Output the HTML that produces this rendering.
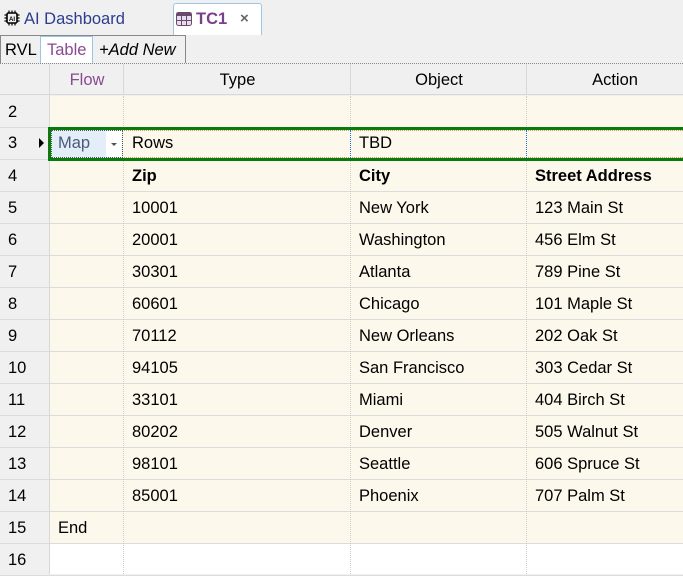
<!DOCTYPE html>
<html><head><meta charset="utf-8"><style>
*{box-sizing:border-box;margin:0;padding:0}
body{width:683px;height:574px;overflow:hidden;background:#f0f0f0;font-family:"Liberation Sans","DejaVu Sans",sans-serif;font-size:16.5px;color:#000;position:relative}
.a{position:absolute}
.t{white-space:nowrap}
</style></head><body>
<div class="a" style="left:0;top:0;width:683px;height:34px;background:#f0f0f0"></div>
<svg class="a" style="left:4px;top:10px" width="16" height="16" viewBox="0 0 16 16">
<rect x="3" y="3" width="10" height="10" rx="1.5" fill="none" stroke="#000" stroke-width="1.6"/>
<g stroke="#000" stroke-width="1.2"><path d="M5 0.5v2.5M8 0.5v2.5M11 0.5v2.5M5 13v2.5M8 13v2.5M11 13v2.5M0.5 5h2.5M0.5 8h2.5M0.5 11h2.5M13 5h2.5M13 8h2.5M13 11h2.5"/></g>
<text x="8" y="11" font-size="6" font-weight="bold" text-anchor="middle" font-family="Liberation Sans">AI</text>
</svg>
<div class="a t" style="left:24px;top:10px;color:#2b3d8f;font-size:16.5px">AI Dashboard</div>
<div class="a" style="left:173px;top:3px;width:89px;height:32px;background:#fff;border:1px solid #9cc6e8;border-bottom:none;border-radius:3px 3px 0 0"></div>
<svg class="a" style="left:176px;top:12px" width="16" height="14" viewBox="0 0 16 14">
<rect x="0.5" y="0.5" width="15" height="13" rx="2" fill="#e8dcef" stroke="#6a4a68"/>
<rect x="0.5" y="0.5" width="15" height="3.5" fill="#6a4a68"/>
<path d="M5.5 4v10M10.5 4v10M0.5 8.5h15" stroke="#6a4a68"/>
</svg>
<div class="a t" style="left:196px;top:10px;color:#7b3f8a;font-weight:bold;font-size:16.5px">TC1</div>
<div class="a t" style="left:240px;top:10px;color:#666;font-size:15px;font-weight:bold">×</div>
<div class="a" style="left:0;top:35px;width:683px;height:29px;background:#f0f0f0;border-bottom:1px dotted #888"></div>
<div class="a" style="left:0;top:35px;width:186px;height:28px;border:1px solid #888;border-bottom:none;background:#f0f0f0"></div>
<div class="a t" style="left:5px;top:41px">RVL</div>
<div class="a" style="left:40px;top:36px;width:53px;height:27px;background:#fff;border:1px solid #9cc6e8;border-bottom:none"></div>
<div class="a t" style="left:47px;top:41px;color:#8a4a8e">Table</div>
<div class="a t" style="left:99px;top:41px;font-style:italic">+Add New</div>
<div class="a" style="left:0;top:64px;width:683px;height:31px;background:#f0f0f0;border-bottom:1px solid #d8d8d8"></div>
<div class="a t" style="left:50px;top:71px;width:74px;text-align:center;color:#8a4a8e">Flow</div>
<div class="a t" style="left:124px;top:71px;width:227px;text-align:center">Type</div>
<div class="a t" style="left:351px;top:71px;width:176px;text-align:center">Object</div>
<div class="a t" style="left:527px;top:71px;width:176px;text-align:center">Action</div>
<div class="a" style="left:50px;top:96px;width:633px;height:448px;background:#fdf8ec"></div>
<div class="a" style="left:50px;top:544px;width:633px;height:30px;background:#fff"></div>
<div id="g"></div>
<div class="a" style="left:49px;top:64px;width:1px;height:510px;background:#d8d8d8"></div>
<div class="a" style="left:123px;top:64px;width:1px;height:31px;background:#d8d8d8"></div>
<div class="a" style="left:350px;top:64px;width:1px;height:31px;background:#d8d8d8"></div>
<div class="a" style="left:526px;top:64px;width:1px;height:31px;background:#d8d8d8"></div>
<div class="a" style="left:123px;top:96px;height:478px;border-left:1px dotted #ccc"></div>
<div class="a" style="left:350px;top:96px;height:478px;border-left:1px dotted #ccc"></div>
<div class="a" style="left:526px;top:96px;height:478px;border-left:1px dotted #ccc"></div>
<script>
var rows=[["",[]],["",[]],["",["Zip","City","Street Address"],1],["",["10001","New York","123 Main St"]],["",["20001","Washington","456 Elm St"]],["",["30301","Atlanta","789 Pine St"]],["",["60601","Chicago","101 Maple St"]],["",["70112","New Orleans","202 Oak St"]],["",["94105","San Francisco","303 Cedar St"]],["",["33101","Miami","404 Birch St"]],["",["80202","Denver","505 Walnut St"]],["",["98101","Seattle","606 Spruce St"]],["",["85001","Phoenix","707 Palm St"]],["End",[]],["",[]]];
var h="";
for(var i=0;i<rows.length;i++){var y=96+i*32;var n=i+2;
h+='<div class="a" style="left:0;top:'+(y+31)+'px;width:683px;height:1px;background:#dcdcdc"></div>';
if(i!=1)h+='<div class="a t" style="left:8px;top:'+(y+7)+'px">'+n+'</div>';
if(rows[i][0])h+='<div class="a t" style="left:58px;top:'+(y+7)+'px">'+rows[i][0]+'</div>';
var c=rows[i][1],xs=[132,359,535],fw=rows[i][2]?'bold':'normal';
for(var j=0;j<c.length;j++)h+='<div class="a t" style="left:'+xs[j]+'px;top:'+(y+7)+'px;font-weight:'+fw+'">'+c[j]+'</div>';
}
document.getElementById('g').innerHTML=h;
</script>
<div class="a" style="left:48px;top:127px;width:635px;height:34px;border:3px solid #0a7a0a;border-right:none;background:#fdf8ec"></div>
<div class="a" style="left:51px;top:130px;width:632px;height:1px;border-top:1px dotted #c96"></div>
<div class="a" style="left:51px;top:157px;width:632px;height:1px;border-top:1px dotted #c96"></div>
<div class="a" style="left:51px;top:130px;width:72px;height:28px;background:#e3eef9;border:1px dotted #555"></div>
<div class="a" style="left:106px;top:131px;width:16px;height:26px;background:#fff"></div>
<div class="a" style="left:111px;top:143px;width:0;height:0;border-left:3.5px solid transparent;border-right:3.5px solid transparent;border-top:3.5px solid #555"></div>
<div class="a t" style="left:58px;top:134px;color:#4a5a7a">Map</div>
<div class="a t" style="left:132px;top:134px">Rows</div>
<div class="a" style="left:350px;top:130px;height:28px;border-left:1px dotted #1a70d0"></div>
<div class="a" style="left:526px;top:130px;height:28px;border-left:1px dotted #1a70d0"></div>
<div class="a t" style="left:359px;top:134px">TBD</div>
<div class="a" style="left:39px;top:138px;width:0;height:0;border-top:5px solid transparent;border-bottom:5px solid transparent;border-left:5px solid #000"></div>
<div class="a t" style="left:8px;top:134px">3</div>
</body></html>
